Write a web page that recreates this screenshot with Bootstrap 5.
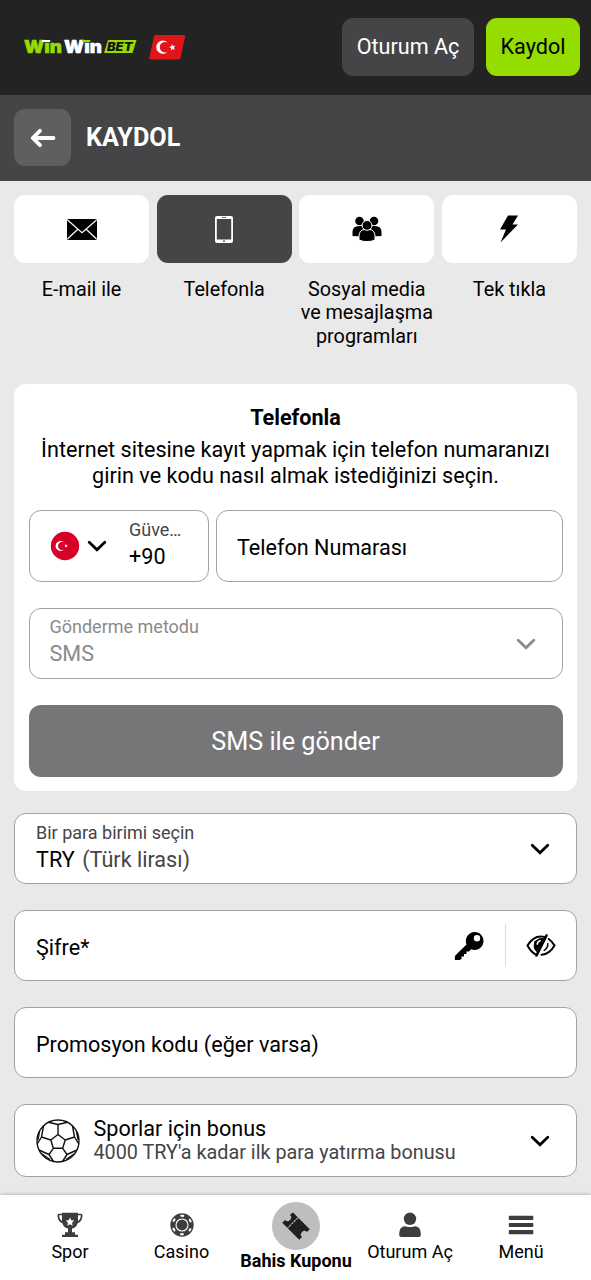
<!DOCTYPE html>
<html lang="tr">
<head>
<meta charset="utf-8">
<meta name="viewport" content="width=device-width, initial-scale=1">
<title>WinWin Bet – Kaydol</title>
<link href="https://cdn.jsdelivr.net/npm/bootstrap@5.3.0/dist/css/bootstrap.min.css" rel="stylesheet">
<style>
  body { font-family: Roboto, "Liberation Sans", sans-serif; background: #e9e9e9; color: #000; font-size: 21.6px; line-height: 25.5px; height: 1280px; overflow: hidden; }
  svg { display: block; flex: none; }
  .site-head { height: 95px; background: #232323; padding: 0 11px 1px 24px; }
  .btn-top { height: 58px; border: 0; border-radius: 11px; font-size: 21.6px; padding: 0 0 1px; line-height: 1; }
  .btn-login { width: 132px; background: #454547; color: #fff; }
  .btn-join { width: 94px; margin-left: 12px; background: #95dc00; color: #000; }
  .title-bar { height: 86px; background: #454547; padding: 0 14px 1px; gap: 15px; }
  .btn-back { width: 57px; height: 57px; border-radius: 11px; background: #5f5f61; }
  .title-bar h1 { font-size: 25.2px; font-weight: 700; line-height: 30px; color: #fff; padding-top: 1px; }
  .page-pad { padding: 14px 14px 0; }
  .methods { display: grid; grid-template-columns: repeat(4, 1fr); gap: 7.5px; height: 189px; }
  .method-btn { height: 68px; border-radius: 11px; background: #fff; color: #000; }
  .method-btn.active { background: #454547; color: #fff; }
  .method-label { font-size: 19.8px; line-height: 23.4px; margin: 15px -4px 0; }
  .panel { background: #fff; border-radius: 12px; height: 407px; padding: 21px 14.5px 0; }
  .panel h2 { font-size: 21.6px; line-height: 26px; font-weight: 700; margin: 0 0 6px; }
  .panel p { margin: 0 -6px 22px; }
  .field { height: 71px; border: 1px solid #a2a2a2; border-radius: 12px; background: #fff; padding: 0 20px 0 21px; }
  .panel .field { padding-left: 20px; }
  .field-label { font-size: 18px; line-height: 22px; color: #454547; margin-bottom: 3px; }
  .chevron { margin-right: 6px; }
  .muted, .muted .field-label { color: #8a8a8b; }
  .soft { color: #454547; }
  .bonus-note { font-size: 19.8px; line-height: 24px; }
  .btn-send { height: 72px; border: 0; border-radius: 12px; background: #767678; color: #fff; font-size: 25.2px; margin-top: 26px; padding: 2px 0 0; }
  .rule { width: 1px; height: 43px; background: #dcdcdc; }
  .bottom-bar { height: 86px; margin-top: 18px; background: #fff; box-shadow: 0 0 4px rgba(0,0,0,.3); display: grid; grid-template-columns: 112px 111px 118px 110px 112px; padding-left: 14px; font-size: 18px; line-height: 22px; color: #000; position: relative; }
  .tab-item { padding-top: 17px; gap: 3px; }
  .tab-item.current { padding-top: 7px; gap: 0; font-weight: 700; }
  .coupon { width: 48px; height: 48px; border-radius: 50%; background: #bebebe; }
</style>
</head>
<body>
<header class="site-head d-flex align-items-center">
  <svg width="162" height="30" viewBox="0 0 162 30" role="img" aria-label="WinWin Bet">
    <g font-family="Inter, sans-serif" font-weight="900" font-size="17.5">
      <text x="0" y="21.300" fill="#95dc00" textLength="38" lengthAdjust="spacingAndGlyphs" stroke="#95dc00" stroke-width=".5">Wın</text>
      <text x="40" y="21.300" fill="#fff" textLength="38" lengthAdjust="spacingAndGlyphs" stroke="#fff" stroke-width=".5">Wın</text>
    </g>
    <path d="M18.500 8h8l-.7 2h-8z" fill="#fff"/><path d="M58.500 8h8l-.7 2h-8z" fill="#95dc00"/>
    <path d="M84 8h28.500l-4 13H80z" fill="#95dc00"/>
    <text x="83" y="18.700" fill="#151515" font-family="Inter, sans-serif" font-weight="900" font-style="italic" font-size="11.500" textLength="25.500" lengthAdjust="spacingAndGlyphs">BET</text>
    <path d="M131.500 3h28.500q1.500 0 1.200 1.500l-4.700 21.500q-.4 1.500-2 1.500h-28q-1.500 0-1.200-1.500L130 4.500q.4-1.500 1.500-1.500z" fill="#e01519"/>
    <path d="M143.500 10.500a6.600 6.600 0 1 0 0 9.400a5.300 5.300 0 1 1 0-9.400z" fill="#fff"/>
    <path d="M148 12l.9 2.100 2.400-.3-1.500 1.900 1.200 2-2.300-.8-1.700 1.500.1-2.300-2.100-1.100 2.300-.6z" fill="#fff"/>
  </svg>
  <button class="btn btn-top btn-login ms-auto">Oturum Aç</button>
  <button class="btn btn-top btn-join">Kaydol</button>
</header>

<div class="title-bar d-flex align-items-center">
  <a class="btn-back d-flex align-items-center justify-content-center" href="#" aria-label="Geri">
    <svg width="26" height="20" viewBox="0 0 26 20" fill="none" stroke="#fff" stroke-width="3.800" stroke-linecap="round" stroke-linejoin="round"><path d="M10 2.800L2.700 10l7.300 7.200M3 10h20.500"/></svg>
  </a>
  <h1 class="m-0">KAYDOL</h1>
</div>

<main class="page-pad">
  <div class="methods text-center">
    <div>
      <div class="method-btn d-flex align-items-center justify-content-center">
        <svg width="30" height="21" viewBox="0 0 30 21"><rect width="30" height="21" rx="1.500"/><path d="M.5 1L15 13.800 29.500 1M.5 20L10.800 10.300M29.500 20L19.200 10.300" fill="none" stroke="#fff" stroke-width="1.200"/></svg>
      </div>
      <div class="method-label">E-mail ile</div>
    </div>
    <div>
      <div class="method-btn active d-flex align-items-center justify-content-center">
        <svg width="18" height="27" viewBox="0 0 18 27"><path fill="#fff" fill-rule="evenodd" d="M2 0h14q2 0 2 2v23q0 2-2 2H2q-2 0-2-2V2Q0 0 2 0zM1.800 3v20.500h14.400V3z"/><path d="M7 1.500h4" stroke="#454547" stroke-width=".8"/><circle cx="9" cy="25.200" r=".9" fill="#454547"/></svg>
      </div>
      <div class="method-label">Telefonla</div>
    </div>
    <div>
      <div class="method-btn d-flex align-items-center justify-content-center">
        <svg width="30" height="26" viewBox="0 0 30 26"><g><circle cx="7.500" cy="5" r="4.300"/><circle cx="22" cy="5" r="4.300"/><path d="M.5 20v-4q0-6 6.500-6h4v10.500zM29.500 20v-4q0-6-6.500-6h-4v10.500z"/></g><g stroke="#fff" stroke-width="1"><path d="M7 24v-3.500q0-7 6-7h4q6 0 6 7V24q-3.500 1.600-8 1.600T7 24z"/><circle cx="15" cy="9.400" r="4.900"/></g></svg>
      </div>
      <div class="method-label">Sosyal media<br>ve mesajlaşma<br>programları</div>
    </div>
    <div>
      <div class="method-btn d-flex align-items-center justify-content-center">
        <svg width="18" height="28" viewBox="0 0 18 28"><path d="M8 .5h10l-5.500 9H18L.5 27.500 6 14.500H0z"/></svg>
      </div>
      <div class="method-label">Tek tıkla</div>
    </div>
  </div>

  <section class="panel">
    <h2 class="text-center">Telefonla</h2>
    <p class="text-center">İnternet sitesine kayıt yapmak için telefon numaranızı<br>girin ve kodu nasıl almak istediğinizi seçin.</p>
    <div class="d-flex" style="gap:7.500px">
      <div class="field d-flex align-items-center" style="width:180px;height:72px">
        <svg width="30" height="30" viewBox="0 0 30 30"><circle cx="15" cy="15" r="14.200" fill="#d80027"/><path d="M14 11.300a5 5 0 1 0 0 7.300a4.100 4.100 0 1 1 0-7.300z" fill="#fff"/><path d="M15.500 13l.8 1.100 1.300-.4-.8 1.200.8 1.200-1.300-.4-.8 1.100v-1.400l-1.300-.5 1.300-.5z" fill="#fff"/></svg>
        <svg style="margin-left:7.500px" width="20" height="14" viewBox="0 0 20 14" fill="none" stroke="#000" stroke-width="2.800" stroke-linecap="round"><path d="M2.200 3.200l7.800 7.600 7.800-7.600"/></svg>
        <div style="margin-left:22px;padding-bottom:3px">
          <div class="field-label">Güve…</div>
          <div>+90</div>
        </div>
      </div>
      <div class="field d-flex align-items-center flex-grow-1" style="height:72px;padding-top:3px">Telefon Numarası</div>
    </div>
    <div class="field muted d-flex align-items-center justify-content-between" style="margin-top:26px">
      <div style="padding-bottom:4px"><div class="field-label">Gönderme metodu</div><div>SMS</div></div>
      <svg class="chevron" width="20" height="14" viewBox="0 0 20 14" fill="none" stroke="#8a8a8b" stroke-width="2.800" stroke-linecap="round"><path d="M2.200 3.200l7.800 7.600 7.800-7.600"/></svg>
    </div>
    <button class="btn btn-send w-100">SMS ile gönder</button>
  </section>

  <div class="field d-flex align-items-center justify-content-between" style="margin-top:22px">
    <div style="padding-bottom:2px"><div class="field-label">Bir para birimi seçin</div><div>TRY<span class="soft" style="margin-left:7.500px">(Türk lirası)</span></div></div>
    <svg class="chevron" width="20" height="14" viewBox="0 0 20 14" fill="none" stroke="#000" stroke-width="2.800" stroke-linecap="round"><path d="M2.200 3.200l7.800 7.600 7.800-7.600"/></svg>
  </div>

  <div class="field d-flex align-items-center" style="margin-top:26px">
    <span class="me-auto pt-1">Şifre*</span>
    <svg width="30" height="30" viewBox="0 0 30 30"><path fill-rule="evenodd" d="M20.500 1a9 9 0 1 1-3.500 17.300l-2 2.200h-2.500V23H10v2.500H7.500V28L5.500 29H1q-.5-2 .3-4.500L12.500 13.500A9 9 0 0 1 20.500 1zM23 4a3.200 3.200 0 1 0 0 6.400A3.200 3.200 0 0 0 23 4z"/></svg>
    <div class="rule" style="margin:0 20px 0 21px"></div>
    <svg width="30" height="24" viewBox="0 0 30 24" fill="none" stroke="#000" stroke-width="2" stroke-linecap="round"><path d="M18.500 2.900Q8 .5 1.500 11.500Q5 18 9.500 20.300M22.700 5q3.300 2.300 5.800 6.500-5 8.800-13 9.200"/><path d="M9 7.500q-2.300 6 1.500 10L18.500 4.500Q13 3.500 9 7.500z" fill="#000" stroke-width="1"/><path d="M20.500 1.500L10.500 21.500" stroke-width="2.600"/><path d="M11.200 10.200q.4-2.700 3-3.400" stroke="#fff" stroke-width="1.500"/><path d="M21.800 9.500q.3 4.300-3.600 7" stroke-width="1.400"/></svg>
  </div>

  <div class="field d-flex align-items-center pt-1" style="margin-top:26px">Promosyon kodu (eğer varsa)</div>

  <div class="field d-flex align-items-center" style="margin-top:26px;height:73px">
    <svg width="44" height="44" viewBox="-22 -22 44 44" fill="none" stroke="#111" stroke-width="1.400" stroke-linejoin="round">
      <circle r="21"/>
      <path d="M0-6.500L7.200-1 4.700 7.300H-4.700L-7.200-1zM0-6.500V-16.500M7.200-1L16.500-4M-7.200-1L-16.500-4M4.700 7.300L9 13.500M-4.700 7.300L-9 13.500"/>
      <path d="M-9.500-18.700L0-16.500 9.500-18.700M-14.500-15L-16.500-4-20.800 3M14.500-15L16.500-4 20.800 3M-19 9L-9 13.500-4.500 20.500M19 9L9 13.500 4.500 20.500"/>
      <path d="M-18.500-9.500L-20.200-1M18.500-9.500L20.200-1M-16 13L-8 18.500M16 13L8 18.500"/>
    </svg>
    <div class="me-auto" style="margin-left:13.500px">
      <div>Sporlar için bonus</div>
      <div class="soft bonus-note">4000 TRY'a kadar ilk para yatırma bonusu</div>
    </div>
    <svg class="chevron" width="20" height="14" viewBox="0 0 20 14" fill="none" stroke="#000" stroke-width="2.800" stroke-linecap="round"><path d="M2.200 3.200l7.800 7.600 7.800-7.600"/></svg>
  </div>
</main>

<nav class="bottom-bar">
  <div class="tab-item d-flex flex-column align-items-center">
    <svg width="26" height="26" viewBox="0 0 26 26"><path d="M5 2.500H2Q1 2.500 1.500 5q.8 5 6 6M21 2.500h3q1 0 .5 2.500-.8 5-6 6" fill="none" stroke="#3d3d3f" stroke-width="1.700"/><path d="M5 .8h16V9q-.5 6.500-6 7.500v3.700h3v2.500h3V25H5v-2.300h3v-2.500h3v-3.700Q5.500 15.500 5 9z" fill="#3d3d3f"/><path d="M13 5.500l1.300 2.700 3 .4-2.200 2.100.5 3-2.600-1.400-2.600 1.400.5-3-2.200-2.100 3-.4z" fill="#fff"/></svg>
    <span>Spor</span>
  </div>
  <div class="tab-item d-flex flex-column align-items-center">
    <svg width="26" height="26" viewBox="-13 -13 26 26" fill="none"><circle r="11.700" fill="#3d3d3f"/><circle r="9.300" stroke="#fff" stroke-width="2" stroke-dasharray="3.600 6.139" stroke-dashoffset="1.800" transform="rotate(30)"/><circle r="6" stroke="#fff" stroke-width="1.100"/></svg>
    <span>Casino</span>
  </div>
  <div class="tab-item current d-flex flex-column align-items-center">
    <div class="coupon d-flex align-items-center justify-content-center">
      <svg width="28" height="28" viewBox="-14 -14 28 28"><g transform="rotate(45)"><path d="M-12-6.500Q-12-7.500-11-7.500H12V-3.500a3.500 3.500 0 0 0 0 7V7.500H-12V3.500a3.500 3.500 0 0 0 0-7z" fill="#202020"/><path d="M-4.500-7.500v15" stroke="#bebebe" stroke-width="1.100" stroke-dasharray="2.600 .8"/></g></svg>
    </div>
    <span class="text-nowrap">Bahis Kuponu</span>
  </div>
  <div class="tab-item d-flex flex-column align-items-center">
    <svg width="26" height="26" viewBox="0 0 26 26" fill="#3d3d3f"><circle cx="13" cy="6.800" r="6.200"/><path d="M2.200 23v-1.500q0-7 6-7.300Q13 16 17.800 14.200q6 .3 6 7.300V23q0 2-2 2H4.200q-2 0-2-2z"/></svg>
    <span class="text-nowrap">Oturum Aç</span>
  </div>
  <div class="tab-item d-flex flex-column align-items-center">
    <svg width="26" height="26" viewBox="0 0 26 26" fill="#3d3d3f"><rect x=".8" y="3.800" width="24.500" height="4.200" rx=".8"/><rect x=".8" y="11" width="24.500" height="4" rx=".8"/><rect x=".8" y="18" width="24.500" height="4.200" rx=".8"/></svg>
    <span>Menü</span>
  </div>
</nav>
<script src="https://cdn.jsdelivr.net/npm/bootstrap@5.3.0/dist/js/bootstrap.bundle.min.js"></script>
</body>
</html>
